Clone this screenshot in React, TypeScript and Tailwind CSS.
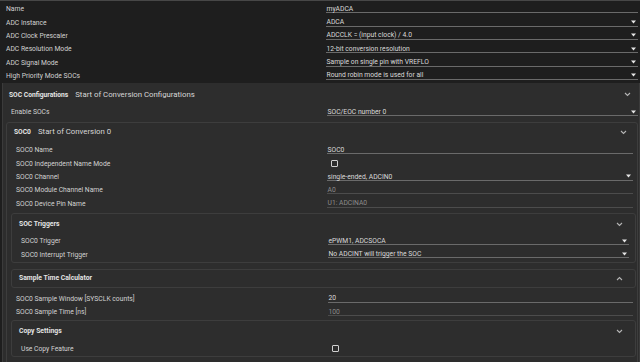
import React from 'react';

function Chevron({ up = false }: { up?: boolean }) {
  return (
    <svg width="7" height="5" viewBox="0 0 7 5" className="shrink-0">
      <path
        d={up ? 'M1 4 L3.5 1.5 L6 4' : 'M1 1 L3.5 3.5 L6 1'}
        fill="none"
        stroke="#b5b5b5"
        strokeWidth="1.1"
      />
    </svg>
  );
}

function Caret() {
  return (
    <svg width="5" height="4" viewBox="0 0 5 4" className="absolute right-[2px] top-[4px]">
      <path d="M0 0.5 H5 L2.5 3.5 Z" fill="#e6e6e6" />
    </svg>
  );
}

function Checkbox() {
  return <div className="ml-[4px] mt-[3px] w-[7px] h-[7px] border border-[#cfcfcf] rounded-[1px]" />;
}

type RowProps = {
  label: string;
  value?: string;
  select?: boolean;
  dim?: boolean;
  check?: boolean;
  labelW: string;
};

function Row({ label, value, select, dim, check, labelW }: RowProps) {
  return (
    <div className="flex items-start h-[13.33px]">
      <div className={`${labelW} shrink-0 h-[10.5px] pt-[3.5px] flex items-center text-[6.75px] leading-none text-[#d2d2d2] whitespace-nowrap`}>
        {label}
      </div>
      {check ? (
        <Checkbox />
      ) : (
        <div
          className={`relative flex-1 h-[10.5px] pt-[3.5px] flex items-center border-b text-[6.75px] leading-none whitespace-nowrap ${
            dim ? 'border-[#4c4c4c] text-[#8c8c8c]' : 'border-[#6a6a6a] text-[#dadada]'
          }`}
        >
          <span className="pl-[0.5px]">{value}</span>
          {select && <Caret />}
        </div>
      )}
    </div>
  );
}

function SubPanel({
  title,
  up = false,
  headerH,
  className = '',
  children,
}: {
  title: string;
  up?: boolean;
  headerH: string;
  className?: string;
  children?: React.ReactNode;
}) {
  return (
    <div className={`ml-[4px] mr-[1px] border border-[#3d3d3d] rounded-[3px] ${className}`}>
      <div className={`${headerH} flex items-center justify-between pl-[7px] pr-[12px]`}>
        <span className="text-[6.8px] font-bold text-[#e4e4e4] leading-none">{title}</span>
        <Chevron up={up} />
      </div>
      {children}
    </div>
  );
}

export default function App() {
  return (
    <div className="w-[640px] h-[362px] overflow-hidden bg-[#1e1e1e] font-['Roboto',sans-serif]">
      {/* module settings */}
      <div className="h-[83px] border-t border-[#474747] pt-[1.7px] pl-[6px] pr-[2px]">
        <Row labelW="w-[320px]" label="Name" value="myADCA" />
        <Row labelW="w-[320px]" label="ADC Instance" value="ADCA" select />
        <Row labelW="w-[320px]" label="ADC Clock Prescaler" value="ADCCLK = (input clock) / 4.0" select />
        <Row labelW="w-[320px]" label="ADC Resolution Mode" value="12-bit conversion resolution" select />
        <Row labelW="w-[320px]" label="ADC Signal Mode" value="Sample on single pin with VREFLO" select />
        <Row labelW="w-[320px]" label="High Priority Mode SOCs" value="Round robin mode is used for all" select />
      </div>

      {/* SOC configurations */}
      <div className="ml-[2px] h-[279px] bg-[#2d2d2d] border-l border-r border-[#3b3b3b]">
        <div className="h-[22.5px] pt-[1px] flex items-center justify-between pl-[6px] pr-[8px]">
          <div className="flex items-baseline gap-[7px]">
            <span className="text-[6.7px] font-bold text-[#e4e4e4] leading-none">SOC Configurations</span>
            <span className="text-[7.8px] text-[#d6d6d6] leading-none">Start of Conversion Configurations</span>
          </div>
          <Chevron />
        </div>
        <div className="pl-[8px] pr-[1px]">
          <Row labelW="w-[316px]" label="Enable SOCs" value="SOC/EOC number 0" select />
        </div>

        {/* SOC0 */}
        <div className="mt-[3px] ml-[3px] mr-[1px] border border-[#3d3d3d] rounded-[3px] pb-[40px]">
          <div className="h-[21px] pb-[2px] flex items-center justify-between pl-[7px] pr-[10px]">
            <div className="flex items-baseline gap-[7px]">
              <span className="text-[6.7px] font-bold text-[#e4e4e4] leading-none">SOC0</span>
              <span className="text-[7.8px] text-[#d6d6d6] leading-none">Start of Conversion 0</span>
            </div>
            <Chevron />
          </div>
          <div className="pl-[9px] pr-[4px]">
            <Row labelW="w-[311px]" label="SOC0 Name" value="SOC0" />
            <Row labelW="w-[311px]" label="SOC0 Independent Name Mode" check />
            <Row labelW="w-[311px]" label="SOC0 Channel" value="single-ended, ADCIN0" select />
            <Row labelW="w-[311px]" label="SOC0 Module Channel Name" value="A0" dim />
            <Row labelW="w-[311px]" label="SOC0 Device Pin Name" value="U1: ADCINA0" dim />
          </div>

          <SubPanel title="SOC Triggers" headerH="h-[21px]" className="mt-[2.2px] pb-[1px]">
            <div className="pl-[9px] pr-[6px]">
              <Row labelW="w-[307px]" label="SOC0 Trigger" value="ePWM1, ADCSOCA" select />
              <Row labelW="w-[307px]" label="SOC0 Interrupt Trigger" value="No ADCINT will trigger the SOC" select />
            </div>
          </SubPanel>

          <SubPanel title="Sample Time Calculator" headerH="h-[17px]" up className="mt-[6px]" />

          <div className="mt-[4px] pl-[9px] pr-[4px]">
            <Row labelW="w-[312px]" label="SOC0 Sample Window [SYSCLK counts]" value="20" />
            <Row labelW="w-[312px]" label="SOC0 Sample Time [ns]" value="100" dim />
          </div>

          <SubPanel title="Copy Settings" headerH="h-[21px]" className="mt-[1px] pb-[1px]">
            <div className="pl-[9px] pr-[6px]">
              <Row labelW="w-[307px]" label="Use Copy Feature" check />
            </div>
          </SubPanel>
        </div>
      </div>
    </div>
  );
}
